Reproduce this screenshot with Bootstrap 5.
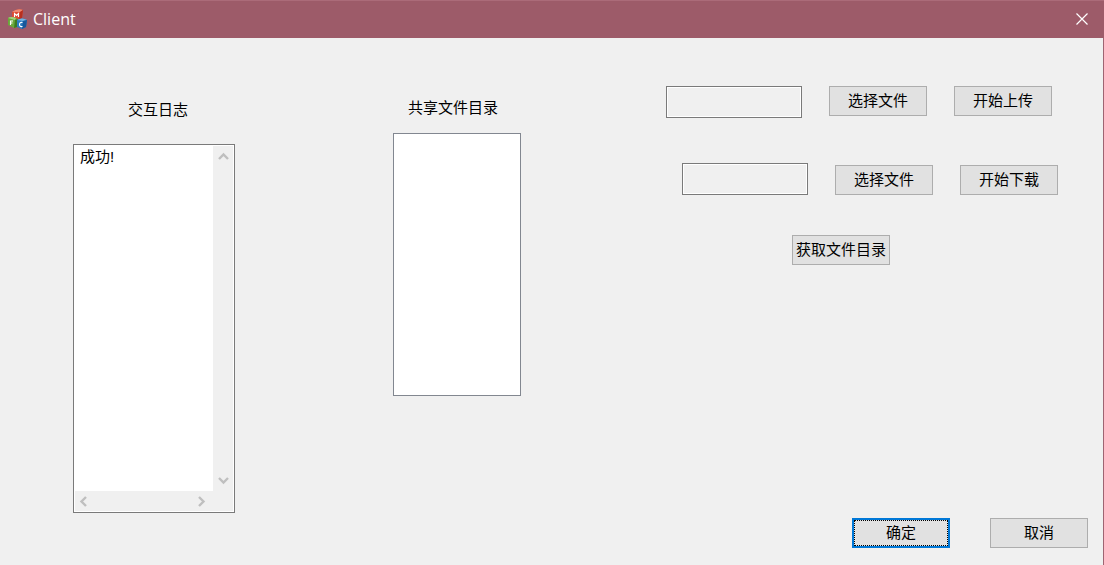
<!DOCTYPE html>
<html lang="zh-CN">
<head>
<meta charset="utf-8">
<meta name="viewport" content="width=device-width, initial-scale=1">
<title>Client</title>
<link href="https://cdn.jsdelivr.net/npm/bootstrap@5.3.0/dist/css/bootstrap.min.css" rel="stylesheet">
<style>
  body { background: #f0f0f0; color: #000; font: 400 15px/24px "Liberation Sans", "Noto Sans CJK SC", sans-serif; }
  .dialog-frame { border-right: 1px solid #9e6472; }
  .titlebar { height: 38px; background: #9d5b69; border-top: 1px solid #ab6b79; color: #fff; padding: 0 15px 2px 7px; margin-right: -1px; font: 400 16px/24px "Open Sans", sans-serif; }
  .titlebar-close { width: 14px; height: 14px; }
  .workspace { padding-left: 73px; }
  .log-panel { width: 162px; padding-top: 60px; margin-right: 158px; gap: 22px; }
  .log-box { border: 1px solid #7a7a7a; background: #fff; padding: 1px; }
  .log-text { resize: none; outline: 0; overflow: hidden; padding: 0 5px; color: #000; line-height: 22px; }
  .scroll-v { width: 20px; background: #f0f0f0; padding: 5px 0; }
  .scroll-h { height: 20px; background: #f0f0f0; padding: 0 27px 0 4px; }
  .scroll-arrow { width: 11px; height: 11px; stroke: #bfbfbf; stroke-width: 2.4; fill: none; }
  .shared-panel { width: 128px; padding-top: 58px; gap: 13px; }
  .shared-list { height: 263px; border: 1px solid #828790; border-radius: 0; background: #fff; outline: 0; }
  .actions { padding-top: 48px; }
  .file-row { gap: 27px; }
  .upload-row { padding-right: 51px; margin-bottom: 45px; }
  .download-row { padding-right: 45px; margin-bottom: 40px; }
  .list-row { padding-right: 213px; }
  .path-box { height: 32px; border: 1px solid #7a7a7a; background: #f0f0f0; box-shadow: inset 0 0 0 1px #fff; outline: 0; padding: 0 6px; }
  .path-upload { width: 136px; }
  .path-download { width: 126px; }
  .btn-dialog { --bs-btn-color: #000; --bs-btn-bg: #e1e1e1; --bs-btn-border-color: #adadad; --bs-btn-border-radius: 0; --bs-btn-padding-x: 0; --bs-btn-padding-y: 2px; --bs-btn-font-size: 15px; --bs-btn-line-height: 24px; --bs-btn-hover-color: #000; --bs-btn-hover-bg: #e5f1fb; --bs-btn-hover-border-color: #0078d7; width: 98px; height: 30px; }
  .btn-dialog.is-default { --bs-btn-border-color: #0078d7; border-width: 2px; padding: 0; outline: 1px dotted #000; outline-offset: -3px; }
  .dialog-footer { gap: 40px; padding: 5px 15px 17px; }
</style>
</head>
<body>
<div class="dialog-frame d-flex flex-column min-vh-100">
  <header class="titlebar d-flex align-items-center justify-content-between">
    <div class="d-flex align-items-center gap-1">
      <svg width="22" height="22" viewBox="0 0 22 22" aria-hidden="true">
        <path d="M5 4q5-4 11-2l-1 8-5 2-5-2z" fill="#dc4b34"/><path d="M5 4q5-4 11-2l-3 2z" fill="#ee8a72"/><path d="M13 4l3-2-1 8-3 2z" fill="#b8301f"/>
        <path d="M1 10q3-2 8 0l2 1-1 8-3 1-6-3z" fill="#6aa83a"/><path d="M1 10q3-2 8 0l-1 2z" fill="#a5d07c"/><path d="M8 12l3-1-1 8-3 1z" fill="#3c7a22"/>
        <path d="M10 12q5-3 10 0l-1 7-4 2-5-2z" fill="#2b7cc0"/><path d="M10 12q5-3 10 0l-4 1z" fill="#74b4e0"/><path d="M16 13l4-1-1 7-4 2z" fill="#17589a"/>
        <path d="M7.500 9V5.500l2 2 2-2V9M3.500 17v-4H6M3.500 15h2M15.500 14.500q-3-.5-3 2t3 2" fill="none" stroke="#fff" stroke-width="1.100"/>
      </svg>
      <span>Client</span>
    </div>
    <button type="button" class="titlebar-close btn border-0 p-0 d-flex" aria-label="关闭">
      <svg width="14" height="14" viewBox="0 0 14 14"><path d="M1.500 1.500l11 11m0-11l-11 11" stroke="#fff" stroke-width="1.200"/></svg>
    </button>
  </header>

  <main class="workspace d-flex flex-grow-1">
    <section class="log-panel d-flex flex-column flex-shrink-0">
      <label for="log" class="text-center ps-2">交互日志</label>
      <div class="log-box d-flex flex-column flex-grow-1">
        <div class="d-flex flex-grow-1">
          <textarea id="log" class="log-text border-0 w-100" readonly>成功!</textarea>
          <div class="scroll-v d-flex flex-column flex-shrink-0 align-items-center justify-content-between">
            <svg class="scroll-arrow" viewBox="0 0 11 11"><path d="M1 8l4.500-4.500L10 8"/></svg>
            <svg class="scroll-arrow" viewBox="0 0 11 11"><path d="M1 3l4.500 4.500L10 3"/></svg>
          </div>
        </div>
        <div class="scroll-h d-flex align-items-center justify-content-between">
          <svg class="scroll-arrow" viewBox="0 0 11 11"><path d="M7 1L2.500 5.500 7 10"/></svg>
          <svg class="scroll-arrow" viewBox="0 0 11 11"><path d="M4 1l4.500 4.500L4 10"/></svg>
        </div>
      </div>
    </section>

    <section class="shared-panel d-flex flex-column flex-shrink-0">
      <label for="shared" class="text-center text-nowrap pe-2">共享文件目录</label>
      <select id="shared" class="shared-list w-100" multiple></select>
    </section>

    <section class="actions d-flex flex-column ms-auto align-items-end">
      <div class="file-row upload-row d-flex align-items-start">
        <input type="text" class="path-box path-upload" aria-label="上传文件路径" readonly>
        <button type="button" class="btn btn-dialog">选择文件</button>
        <button type="button" class="btn btn-dialog">开始上传</button>
      </div>
      <div class="file-row download-row d-flex align-items-end">
        <input type="text" class="path-box path-download" aria-label="下载文件路径" readonly>
        <button type="button" class="btn btn-dialog">选择文件</button>
        <button type="button" class="btn btn-dialog">开始下载</button>
      </div>
      <div class="list-row">
        <button type="button" class="btn btn-dialog text-nowrap">获取文件目录</button>
      </div>
    </section>
  </main>

  <footer class="dialog-footer d-flex justify-content-end">
    <button type="submit" class="btn btn-dialog is-default">确定</button>
    <button type="button" class="btn btn-dialog">取消</button>
  </footer>
</div>
<script src="https://cdn.jsdelivr.net/npm/bootstrap@5.3.0/dist/js/bootstrap.bundle.min.js"></script>
</body>
</html>
